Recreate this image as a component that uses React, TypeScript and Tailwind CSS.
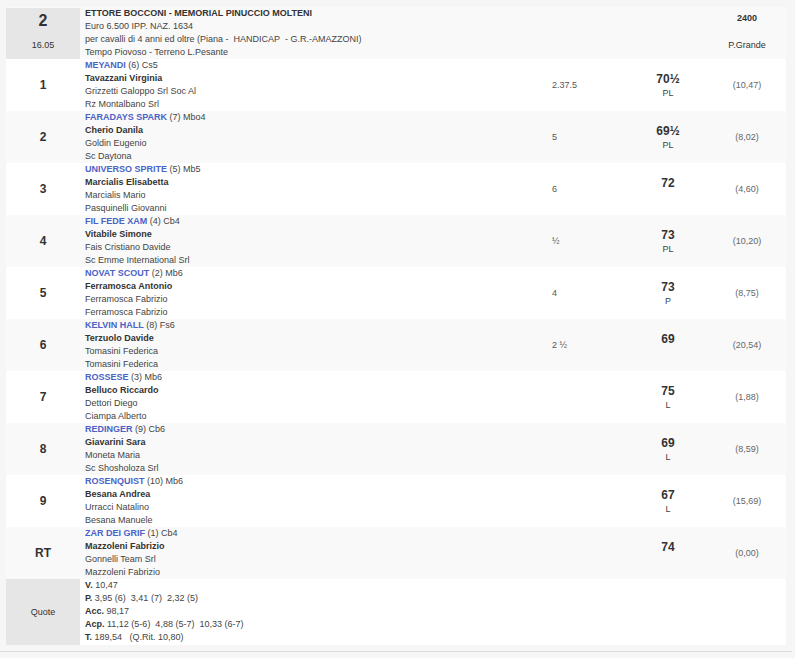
import React from 'react';

interface Runner {
  pos: string;
  horse: string;
  extra: string;
  jockey: string;
  trainer: string;
  owner: string;
  dist: string;
  weight: string;
  note: string;
  odds: string;
}

const runners: Runner[] = [
  { pos: '1', horse: 'MEYANDI', extra: '(6) Cs5', jockey: 'Tavazzani Virginia', trainer: 'Grizzetti Galoppo Srl Soc Al', owner: 'Rz Montalbano Srl', dist: '2.37.5', weight: '70½', note: 'PL', odds: '(10,47)' },
  { pos: '2', horse: 'FARADAYS SPARK', extra: '(7) Mbo4', jockey: 'Cherio Danila', trainer: 'Goldin Eugenio', owner: 'Sc Daytona', dist: '5', weight: '69½', note: 'PL', odds: '(8,02)' },
  { pos: '3', horse: 'UNIVERSO SPRITE', extra: '(5) Mb5', jockey: 'Marcialis Elisabetta', trainer: 'Marcialis Mario', owner: 'Pasquinelli Giovanni', dist: '6', weight: '72', note: '', odds: '(4,60)' },
  { pos: '4', horse: 'FIL FEDE XAM', extra: '(4) Cb4', jockey: 'Vitabile Simone', trainer: 'Fais Cristiano Davide', owner: 'Sc Emme International Srl', dist: '½', weight: '73', note: 'PL', odds: '(10,20)' },
  { pos: '5', horse: 'NOVAT SCOUT', extra: '(2) Mb6', jockey: 'Ferramosca Antonio', trainer: 'Ferramosca Fabrizio', owner: 'Ferramosca Fabrizio', dist: '4', weight: '73', note: 'P', odds: '(8,75)' },
  { pos: '6', horse: 'KELVIN HALL', extra: '(8) Fs6', jockey: 'Terzuolo Davide', trainer: 'Tomasini Federica', owner: 'Tomasini Federica', dist: '2 ½', weight: '69', note: '', odds: '(20,54)' },
  { pos: '7', horse: 'ROSSESE', extra: '(3) Mb6', jockey: 'Belluco Riccardo', trainer: 'Dettori Diego', owner: 'Ciampa Alberto', dist: '', weight: '75', note: 'L', odds: '(1,88)' },
  { pos: '8', horse: 'REDINGER', extra: '(9) Cb6', jockey: 'Giavarini Sara', trainer: 'Moneta Maria', owner: 'Sc Shosholoza Srl', dist: '', weight: '69', note: 'L', odds: '(8,59)' },
  { pos: '9', horse: 'ROSENQUIST', extra: '(10) Mb6', jockey: 'Besana Andrea', trainer: 'Urracci Natalino', owner: 'Besana Manuele', dist: '', weight: '67', note: 'L', odds: '(15,69)' },
  { pos: 'RT', horse: 'ZAR DEI GRIF', extra: '(1) Cb4', jockey: 'Mazzoleni Fabrizio', trainer: 'Gonnelli Team Srl', owner: 'Mazzoleni Fabrizio', dist: '', weight: '74', note: '', odds: '(0,00)' },
];

const cols = 'grid grid-cols-[74px_468px_80px_80px_78px]';

export default function App() {
  return (
    <div
      className="w-[795px] h-[658px] bg-[#f6f6f6] text-[9px] leading-[13px] text-[#333]"
      style={{ fontFamily: '"Liberation Sans", Arial, sans-serif' }}
    >
      <div className="pt-[7px] pl-[6px]">
        <div className="w-[780px]">
          {/* race header */}
          <div className={`${cols} bg-[#f9f9f9] h-[52px]`}>
            <div className="bg-[#e6e6e6] flex flex-col items-center pt-[3px] mt-[1px]">
              <span className="text-[16px] leading-[20px] font-bold text-[#333]">2</span>
              <span className="mt-[8px] text-[#333]">16.05</span>
            </div>
            <div className="pl-[5px] text-[#444]">
              <div className="font-bold text-[#333]">ETTORE BOCCONI - MEMORIAL PINUCCIO MOLTENI</div>
              <div>Euro 6.500 IPP. NAZ. 1634</div>
              <div className="whitespace-pre">per cavalli di 4 anni ed oltre (Piana -  HANDICAP  - G.R.-AMAZZONI)</div>
              <div>Tempo Piovoso - Terreno L.Pesante</div>
            </div>
            <div />
            <div />
            <div className="flex flex-col items-center pt-[5px] text-[#333]">
              <span className="font-bold">2400</span>
              <span className="mt-[14px]">P.Grande</span>
            </div>
          </div>

          {runners.map((r, i) => (
            <div key={r.pos} className={`${cols} h-[52px] ${i % 2 === 0 ? 'bg-white' : 'bg-[#f9f9f9]'}`}>
              <div className="flex items-center justify-center text-[12px] font-bold text-[#333]">{r.pos}</div>
              <div className="pl-[5px]">
                <div>
                  <span className="font-bold text-[#4b63c6]">{r.horse}</span>{' '}
                  <span className="text-[#444]">{r.extra}</span>
                </div>
                <div className="font-bold text-[#333]">{r.jockey}</div>
                <div className="text-[#444]">{r.trainer}</div>
                <div className="text-[#444]">{r.owner}</div>
              </div>
              <div className="flex items-center pl-[4px] text-[#555]">{r.dist}</div>
              <div className="flex flex-col items-center pt-[12px]">
                <span className="text-[12px] leading-[16px] font-bold text-[#333]">{r.weight}</span>
                <span className="text-[#444]">{r.note || '\u00a0'}</span>
              </div>
              <div className="flex items-center justify-center text-[#666]">{r.odds}</div>
            </div>
          ))}

          {/* quote */}
          <div className={`${cols} bg-white h-[66px]`}>
            <div className="bg-[#e6e6e6] flex items-center justify-center text-[#333]">Quote</div>
            <div className="pl-[5px] text-[#444] whitespace-pre">
              <div><b className="text-[#333]">V.</b> 10,47</div>
              <div><b className="text-[#333]">P.</b> 3,95 (6)  3,41 (7)  2,32 (5)</div>
              <div><b className="text-[#333]">Acc.</b> 98,17</div>
              <div><b className="text-[#333]">Acp.</b> 11,12 (5-6)  4,88 (5-7)  10,33 (6-7)</div>
              <div><b className="text-[#333]">T.</b> 189,54   (Q.Rit. 10,80)</div>
            </div>
            <div />
            <div />
            <div />
          </div>
        </div>
      </div>
      <div className="mt-[6px] w-[792px] border-t border-[#dcdcdc]" />
    </div>
  );
}
